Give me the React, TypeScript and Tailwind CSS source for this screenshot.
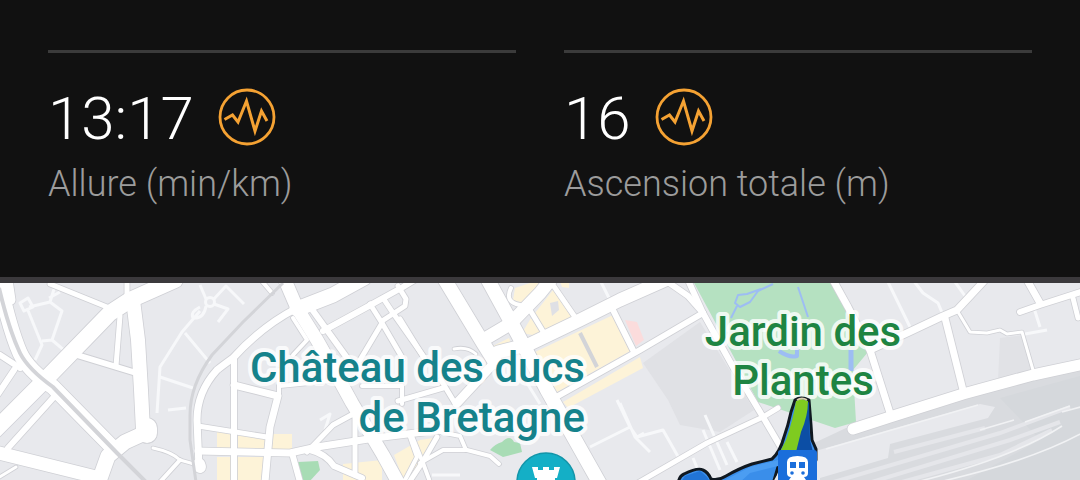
type Road = { d: string; w: number };

const metrics = [
    { value: "13:17", label: "Allure (min/km)" },
    { value: "16", label: "Ascension totale (m)" },
];

const roads: Road[] = [
    { d: "M-5 430L40 385L110 313L130 300L175 280", w: 16 },
    { d: "M133 300L138 340L141 390L143 430L146 432", w: 14 },
    { d: "M147 432L125 442L108 456L98 484", w: 15 },
    { d: "M147 428L147 433", w: 20 },
    { d: "M-5 452L100 478", w: 13 },
    { d: "M0 285Q10 330 20 353Q28 370 53 387L112 447", w: 15 },
    { d: "M8 280L11 300", w: 9 },
    { d: "M50 284L107 307", w: 5 },
    { d: "M127 280V300", w: 5 },
    { d: "M120 316L116 366", w: 5 },
    { d: "M77 355L133 372", w: 6 },
    { d: "M53 398L8 448", w: 6 },
    { d: "M-2 394L14 370", w: 6 },
    { d: "M0 355L20 368", w: 6 },
    { d: "M-2 478L16 467", w: 3 },
    { d: "M153 448Q172 452 180 460L194 464L200 465", w: 3 },
    { d: "M180 460L160 482", w: 4 },
    { d: "M285 280L297 308L317 340L335 372L352 403L383 455L399 484", w: 13 },
    { d: "M297 308Q262 326 233 358Q222 366 217 370Q197 392 197 420L199 468", w: 7 },
    { d: "M199 464L200 467", w: 12 },
    { d: "M297 309L333 295L364 278", w: 15 },
    { d: "M261 280L272 293", w: 4 },
    { d: "M311 308L350 362", w: 6 },
    { d: "M323 331L367 307L403 287L416 279", w: 6 },
    { d: "M370 304L382 323L360 360", w: 5 },
    { d: "M382 323L403 359", w: 5 },
    { d: "M382 321L405 306L406 299L398 286", w: 5 },
    { d: "M383 298L393 313L424 357", w: 5 },
    { d: "M293 318L307 340L293 355", w: 4 },
    { d: "M234 358V482", w: 6 },
    { d: "M234 385L278 396L270 427L265 482", w: 7 },
    { d: "M279 370V394", w: 4 },
    { d: "M280 386L340 380", w: 4 },
    { d: "M198 426L267 437", w: 5 },
    { d: "M198 451L290 453L317 447L375 438L440 430", w: 7 },
    { d: "M307 452L333 425L355 413V475", w: 5 },
    { d: "M292 453L300 482", w: 6 },
    { d: "M310 450Q326 454 334 466L362 478", w: 6 },
    { d: "M410 437L417 457L404 482", w: 4 },
    { d: "M362 386H402V404", w: 4 },
    { d: "M400 319L424 358", w: 5 },
    { d: "M398 401L443 388", w: 5 },
    { d: "M441 380L456 405", w: 5 },
    { d: "M412 436L423 463L430 482", w: 4 },
    { d: "M437 437L422 463L408 484", w: 5 },
    { d: "M420 463L443 450L467 450L490 456L499 464", w: 4 },
    { d: "M440 432L460 436L466 450", w: 4 },
    { d: "M445 280L483 343L495 362", w: 14 },
    { d: "M488 280L517 333L547 390L600 484", w: 14 },
    { d: "M483 340L510 324L540 293L552 278", w: 13 },
    { d: "M498 352L530 344L580 320L620 300L672 277", w: 13 },
    { d: "M495 362L457 403", w: 9 },
    { d: "M530 310L547 338", w: 5 },
    { d: "M553 285L577 320", w: 5 },
    { d: "M613 310L633 350", w: 6 },
    { d: "M558 396L640 350L703 313", w: 6 },
    { d: "M511 288Q504 302 520 305", w: 4 },
    { d: "M454 349Q467 346 476 354", w: 3 },
    { d: "M665 280L688 296L703 313", w: 6 },
    { d: "M688 280L703 313L733 367L763 417L783 451", w: 6 },
    { d: "M636 484L707 443L763 417L778 408", w: 5 },
    { d: "M833 280L848 307L870 350L890 413", w: 7 },
    { d: "M870 350L907 333L943 316L957 310L984 281", w: 7 },
    { d: "M945 318L963 390", w: 7 },
    { d: "M958 312L970 332L987 333L1000 330L1007 334L1022 332L1033 370", w: 3 },
    { d: "M1027 280L1040 303", w: 7 },
    { d: "M1020 312L1040 305L1084 291", w: 6 },
    { d: "M1073 298L1078 318", w: 5 },
    { d: "M853 429L890 417L963 394L1033 375L1084 364", w: 11 },
];

const paths = [
    "M20 303L28 298L33 307L24 311ZM27 308L42 345L35 360M29 307L50 302L62 311L52 340L65 351M50 302L55 286M42 341L52 340M60 292L49 298",
    "M200 307Q190 312 193 318Q204 319 206 306M200 311L182 332L160 367L157 413M185 333L210 363M160 377L193 388M168 410L186 408",
    "M214 304L228 309L218 322M213 300L226 286L244 304M206 299L200 285",
    "M617 400L630 427L637 437L644 433M590 447L630 427M620 403L635 437L650 452M637 437L663 430L680 460",
    "M705 415L727 465M703 430L720 470M727 442L737 462M693 458L698 470",
    "M887 280L910 327M913 280L923 293L938 303L943 315M955 282L965 296M1033 305L1040 327M1025 334L1047 330",
    "M600 280L610 300M527 383L540 404M432 475H460M320 420L330 414L325 430M436 410L446 416",
];

const yellowBlocks =
    "M217 432H231V448H217ZM238 434H292V449H238ZM217 457H266V482H217ZM343 464L382 460V482H343ZM394 455L420 440L440 437L412 474L404 482ZM513 300L515 288L530 283H550L535 300L525 303ZM535 313L553 290L574 320L547 335ZM522 333L531 318L543 337ZM491 347L509 338L511 343L497 353ZM535 352L613 315L632 350L557 392ZM563 402L640 357L643 368L568 408ZM560 281H569V288L562 287Z";

const railGaps = [
    "M894 452L985 428",
    "M820 486L1000 433L1070 407",
    "M852 488L1010 440L1060 422",
    "M880 488L1000 455L1052 430",
];

const railLines = [
    "M826 449L978 405",
    "M980 430L1014 420",
    "M1025 422L1070 406",
    "M930 484Q1030 462 1084 432",
    "M900 486Q1010 460 1062 426",
    "M1062 412L1084 406",
];

export default function App() {
    return (
        <main className="w-full bg-[#111111] font-[Roboto,sans-serif]">
            <section className="grid grid-cols-2 gap-12 px-12 pt-[50px] pb-16">
                {metrics.map((metric) => (
                    <Metric key={metric.label} value={metric.value} label={metric.label} />
                ))}
            </section>
            <div className="border-t-[6px] border-[#3b393c]">
                <RouteMap />
            </div>
        </main>
    );
}

function Metric({ value, label }: { value: string; label: string }) {
    return (
        <div className="flex flex-col gap-[6px] border-t-[3px] border-[#3b3b3b] pt-8 font-light">
            <div className="flex items-start gap-6">
                <span className="pt-1 text-[60px] leading-[60px] text-white">{value}</span>
                <span className="pt-[3px]">
                    <PulseIcon />
                </span>
            </div>
            <span className="text-[36px] leading-[58px] whitespace-nowrap text-[#9c9c9c]">{label}</span>
        </div>
    );
}

function PulseIcon() {
    return (
        <svg viewBox="0 0 58 58" className="size-[58px]" fill="none" stroke="#f5a233" aria-hidden="true">
            <circle cx="29" cy="29" r="27" strokeWidth="2.8" />
            <path d="M6.5 31.5L14.5 27L20 34L28.5 13L37 43L43.5 23L49 33" strokeWidth="3" />
        </svg>
    );
}

function RouteMap() {
    return (
        <svg viewBox="0 283 1080 197" className="block w-full bg-[#e8e9ed]" role="img" aria-label="Carte du parcours">
            {/* land use */}
            <path d="M643 363L700 322L754 410L720 432L680 425L668 400Z" fill="#e0e1e5" />
            <path d="M1000 338L1025 335L1033 370L998 380Z" fill="#e1e2e6" />
            <path d={yellowBlocks} fill="#fdf3d8" />
            <path d="M625 320L637 322L644 340L636 346Z" fill="#fbdcdc" />
            <path d="M550 303L558 301L559 310L552 316Z" fill="#dfe0e5" />
            <path d="M693 281H835L868 352L853 370L856 422L835 428L758 402Z" fill="#b5e1c1" />
            <path d="M298 462L318 461L320 470L309 482H303Z" fill="#a8dcb5" />
            <path d="M490 450Q495 444 502 442Q510 434 514 442L520 443L522 452L503 457Z" fill="#a8dcb5" />

            {/* station and tracks */}
            <path d="M812 444L846 428L990 388L1084 365V484H820V478L888 458L890 444L988 418L995 407L980 404L812 452Z" fill="#d9dbdf" />
            <path d="M1000 398L1084 375V484H960L1040 440Z" fill="#d5d8dc" />
            <g fill="none" stroke="#e5e6ea" strokeWidth="4">
                {railGaps.map((d) => (
                    <path key={d} d={d} />
                ))}
            </g>
            <g fill="none" stroke="#f1f2f4" strokeWidth="1.6">
                {railLines.map((d) => (
                    <path key={d} d={d} />
                ))}
            </g>

            <g fill="none" stroke="#f7f8fa" strokeWidth="3" strokeLinejoin="round">
                {paths.map((d) => (
                    <path key={d} d={d} />
                ))}
                <circle cx="210" cy="302" r="4.5" />
            </g>

            {/* road casings first, so that crossings stay open */}
            <g fill="none" stroke="#cfd0d5" strokeLinejoin="round" strokeLinecap="round">
                {roads.map((road) => (
                    <path key={road.d} d={road.d} strokeWidth={road.w + 1.6} />
                ))}
            </g>
            <g fill="none" stroke="#ffffff" strokeLinejoin="round" strokeLinecap="round">
                {roads.map((road) => (
                    <path key={road.d} d={road.d} strokeWidth={road.w} />
                ))}
            </g>
            <g fill="none" stroke="#d3d4d8">
                <path d="M-1 288Q9 330 20 353Q28 369 53 387L117 453L148 484" strokeWidth="4" />
                <path d="M283 283L243 322L212 355Q190 385 190 415V440L196 482" strokeWidth="3" />
                <path d="M580 333L597 367" strokeWidth="4" />
            </g>

            {/* ponds and streams */}
            <g fill="none" stroke="#9dbdf3" strokeWidth="2" strokeLinejoin="round">
                <path d="M773 284L758 291L750 302L740 307L735 303L738 295L747 294L761 289M737 306L731 318" />
                <path d="M798 287L808 317" />
                <path d="M779 351Q789 358 797 356V348" strokeWidth="4" />
                <path d="M851 350V371" strokeWidth="5" />
            </g>

            <g
                fontFamily="Roboto, sans-serif"
                fontWeight="500"
                fontSize="42"
                stroke="#ffffff"
                strokeOpacity="0.8"
                strokeWidth="8"
                strokeLinejoin="round"
                paintOrder="stroke"
            >
                <text textAnchor="end" fill="#15828b">
                    <tspan x="585" y="382">Château des ducs</tspan>
                    <tspan x="585" y="432">de Bretagne</tspan>
                </text>
                <text textAnchor="middle" fill="#1e8442">
                    <tspan x="803" y="346">Jardin des</tspan>
                    <tspan x="803" y="395">Plantes</tspan>
                </text>
            </g>

            <CastlePin />
            <Track />
            <StationBadge />
        </svg>
    );
}

function CastlePin() {
    return (
        <g>
            <circle cx="546" cy="482" r="29" fill="#14afc6" stroke="#1295a9" strokeWidth="1.5" />
            <path d="M532 467H538V470H543V467H549V470H554V467H560L557 478H535Z" fill="#ffffff" />
            <path d="M537 478H555V484H537Z" fill="#ffffff" />
        </g>
    );
}

function Track() {
    return (
        <g strokeLinejoin="round">
            <path
                d="M678 484Q679 476 684 474Q698 467 703 470Q708 472 711 479Q718 481 726 476Q740 468 752 464L772 459Q780 452 784 437Q788 426 791 412L795 400Q801 396 809 400L811 425L812 440L816 449V460H780L773 484Z"
                fill="#3a8eea"
                stroke="#101820"
                strokeWidth="3"
            />
            <path d="M681 482L685 476L700 471L707 477L711 484Z" fill="#2174d6" />
            <path d="M725 480L750 467L778 460V466L750 473L738 484Z" fill="#4b9df2" />
            <path d="M804 405L809 402L810 440L813 452H794L800 426Z" fill="#0c4ea5" />
            <path d="M796 401L801 399L808 401Q808 416 801 432L796 452H780L786 440Q793 420 796 401Z" fill="#7fcb20" />
            <path d="M797 400Q802 397 807 400" fill="none" stroke="#d8cfae" strokeWidth="2" />
            <path d="M782 466V484H772Z" fill="#e8e9ed" />
        </g>
    );
}

function StationBadge() {
    return (
        <g>
            <rect x="778" y="450" width="39" height="38" rx="3" fill="#1a6edb" />
            <path
                d="M787 462Q787 456 797.5 456Q808 456 808 462V473Q808 477 804 477L806 480H789L791 477Q787 477 787 473Z"
                fill="#ffffff"
            />
            <path d="M790 462H796V468H790ZM799 462H805V468H799Z" fill="#1a6edb" />
            <circle cx="792" cy="473" r="1.8" fill="#1a6edb" />
            <circle cx="803" cy="473" r="1.8" fill="#1a6edb" />
        </g>
    );
}
